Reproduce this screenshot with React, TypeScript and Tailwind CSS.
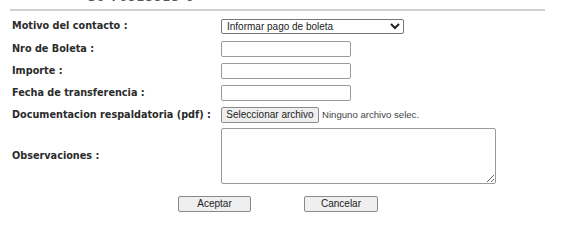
import React from "react";

const labelCls =
  "w-[209px] shrink-0 whitespace-nowrap font-['DejaVu_Sans',Verdana,sans-serif] font-bold text-[9.7px] text-[#2b2b2b]";
const inputCls =
  "w-[130px] h-[16px] border border-[#9a9a9a] rounded-[2px] bg-white px-1 text-[10px]";

const Row = ({ label, h, children }: { label: string; h: string; children: React.ReactNode }) => (
  <div className={`flex items-center ${h}`}>
    <div className={labelCls}>{label}</div>
    {children}
  </div>
);

const App = () => {
  return (
    <div className="w-[567px] h-[242px] bg-white overflow-hidden font-['Liberation_Sans',Arial,sans-serif] text-[#222]">
      {/* cut header text */}
      <div className="h-[4px] overflow-hidden pl-[88px]">
        <div className="-mt-[10px] font-['DejaVu_Sans',sans-serif] font-bold text-[11px] text-[#555] tracking-[1px]">
          30-70925925-6
        </div>
      </div>
      <div className="ml-[10px] mt-[5px] w-[535px] border-t-2 border-[#cfcfcf]" />

      <div className="pl-[12px] mt-[4px]">
        <Row label="Motivo del contacto :" h="h-[23px]">
          <select className="w-[183px] h-[15px] border border-[#777] rounded-[2px] bg-white text-[10px] leading-none pl-[1px]">
            <option>Informar pago de boleta</option>
          </select>
        </Row>
        <Row label="Nro de Boleta :" h="h-[22px]">
          <input type="text" className={inputCls} />
        </Row>
        <Row label="Importe :" h="h-[22px]">
          <input type="text" className={inputCls} />
        </Row>
        <Row label="Fecha de transferencia :" h="h-[22px]">
          <input type="text" className={inputCls} />
        </Row>
        <Row label="Documentacion respaldatoria (pdf) :" h="h-[22px]">
          <div className="flex items-center">
            <button className="w-[98px] h-[16px] border border-[#8a8a8a] rounded-[2px] bg-[#efefef] text-[10px] leading-none">
              Seleccionar archivo
            </button>
            <span className="ml-[3px] text-[9.6px] text-[#444]">Ninguno archivo selec.</span>
          </div>
        </Row>
        <div className="flex items-center mt-[2px]">
          <div className={labelCls}>Observaciones :</div>
          <textarea className="w-[275px] h-[56px] border border-[#9a9a9a] rounded-[2px] bg-white text-[10px]" />
        </div>
      </div>

      <div className="flex justify-center gap-[53px] pr-[11px] mt-[12px]">
        <button className="w-[73px] h-[16px] border border-[#8a8a8a] rounded-[2px] bg-[#efefef] text-[10px] leading-none">
          Aceptar
        </button>
        <button className="w-[74px] h-[16px] border border-[#8a8a8a] rounded-[2px] bg-[#efefef] text-[10px] leading-none">
          Cancelar
        </button>
      </div>
    </div>
  );
};

export default App;
